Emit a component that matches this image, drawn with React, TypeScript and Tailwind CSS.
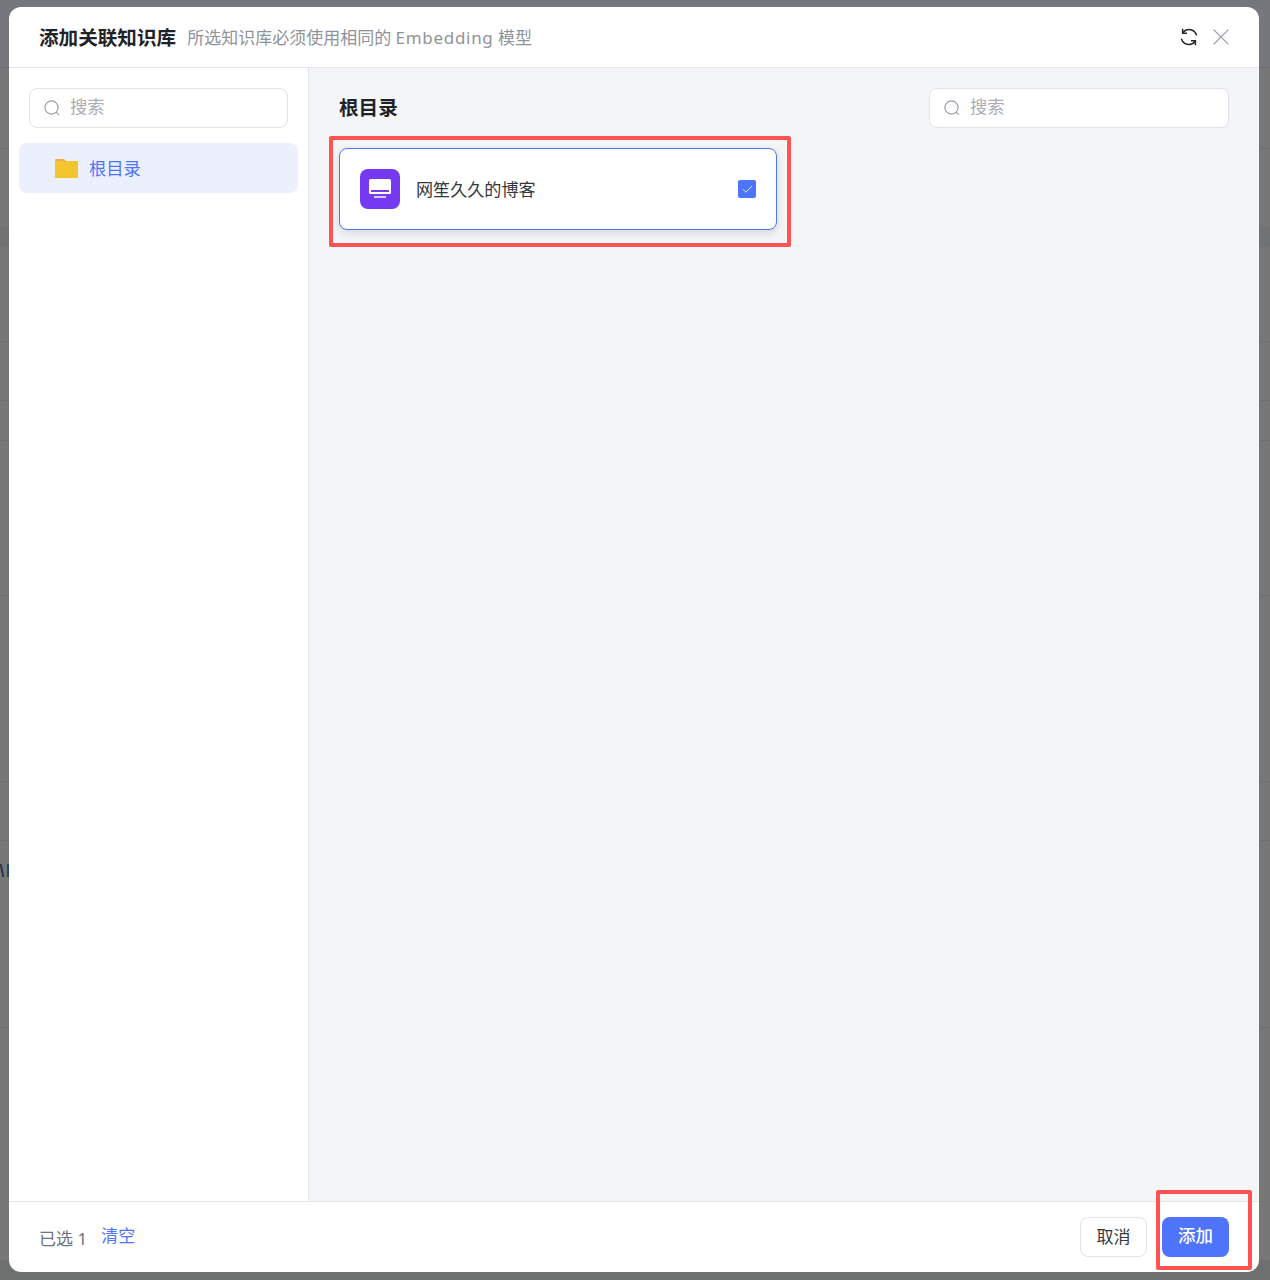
import { Check } from "lucide-react";

const font = "font-['Noto_Sans','Noto_Sans_CJK_SC',sans-serif]";

function SearchBox({ width }: { width: string }) {
  return (
    <div className={`flex h-10 items-center gap-[10px] rounded-lg border border-[#e0e2ea] bg-white pl-[14px] ${width}`}>
      <svg width="16" height="16" viewBox="0 0 16 16" fill="none" stroke="#9a9ea8" strokeWidth="1.2">
        <circle cx="7.5" cy="7.5" r="6.6" />
        <path d="M12.4 12.4l2.2 2.2" strokeLinecap="round" />
      </svg>
      <span className="pb-[2px] text-[17.3px] leading-none text-[#a9adb5]">搜索</span>
    </div>
  );
}

function RefreshIcon() {
  return (
    <svg width="18" height="20" viewBox="0 0 18 20" fill="none" stroke="#24282f" strokeWidth="1.6">
      <path d="M3 5.4A7.8 7.8 0 0 1 16.6 8.4" />
      <path d="M15 14.6A7.8 7.8 0 0 1 1.4 11.6" />
      <path d="M2.6 1.8v4.4h4.4" strokeWidth="1.5" />
      <path d="M15.4 18.2v-4.4h-4.4" strokeWidth="1.5" />
    </svg>
  );
}

function CloseIcon() {
  return (
    <svg width="16" height="16" viewBox="0 0 16 16" fill="none" stroke="#9a9ea8" strokeWidth="1.3">
      <path d="M0.6 0.6l14.8 14.8M15.4 0.6L0.6 15.4" />
    </svg>
  );
}

function FolderIcon() {
  return (
    <svg width="23" height="19" viewBox="0 0 23 19">
      <path d="M0 1a1 1 0 0 1 1-1h8l2 2H0z" fill="#eeaa4c" />
      <rect x="0" y="2" width="23" height="17" fill="#f3c62d" />
    </svg>
  );
}

function DatasetIcon() {
  return (
    <div className="flex h-10 w-10 items-center justify-center rounded-lg bg-[#7539f2]">
      <svg width="22" height="20" viewBox="0 0 22 20">
        <rect x="0" y="0" width="22" height="15" rx="1.5" fill="#fff" />
        <rect x="2" y="11" width="18" height="2" fill="#7539f2" />
        <rect x="5" y="17" width="12" height="2" fill="#d8c8fb" />
      </svg>
    </div>
  );
}

// faint rows of the page behind the overlay
const backdropLines = ["top-[341px]", "top-[400px]", "top-[440px]", "top-[595px]", "top-[781px]", "top-[840px]", "top-[1027px]"];

export default function App() {
  return (
    <div className={`relative h-[1280px] w-[1270px] overflow-hidden bg-[#767776] pl-[9px] pt-[7px] ${font}`}>
      <div className="absolute inset-x-0 top-0 h-[67px] bg-[#75777c]" />
      <div className="absolute inset-x-0 top-[67px] h-px bg-[#6b6d6e]" />
      <div className="absolute inset-x-0 top-[148px] h-px bg-[#6d6e6e]" />
      <div className="absolute inset-x-0 top-[227px] h-[20px] bg-[#717274]" />
      {backdropLines.map((line) => (
        <div key={line} className={`absolute inset-x-0 h-px bg-[#6d6e6e] ${line}`} />
      ))}
      <div className="absolute left-[1px] top-[864px] h-[13px] w-[2px] -rotate-12 bg-[#2a3350]" />
      <div className="absolute left-[7px] top-[864px] h-[13px] w-[2px] bg-[#1d4a7a]" />
      <div className="absolute inset-x-0 top-[1260px] h-5 bg-[#6e6f6f]" />

      <div className="relative flex h-[1265px] w-[1250px] flex-col overflow-hidden rounded-xl bg-white">
        <header className="flex h-[61px] shrink-0 items-center justify-between border-b border-[#e3e5ea] pl-[30px] pr-[30px]">
          <div className="flex items-center gap-[11px]">
            <span className="pt-[2px] text-[19.6px] font-bold leading-none text-[#1f2329]">添加关联知识库</span>
            <span className="text-[17px] leading-none text-[#8f939b]">
              所选知识库必须使用相同的 <span className="tracking-[0.7px]">Embedding</span> 模型
            </span>
          </div>
          <div className="flex items-center gap-[15px]">
            <RefreshIcon />
            <CloseIcon />
          </div>
        </header>

        <div className="flex min-h-0 flex-1">
          <aside className="w-[300px] shrink-0 border-r border-[#e3e5ea] px-[10px] pt-5">
            <div className="px-[10px]">
              <SearchBox width="w-[259px]" />
            </div>
            <div className="mt-[15px] flex h-[50px] w-[279px] items-center gap-[11px] rounded-lg bg-[#ecf0fd] pl-9">
              <FolderIcon />
              <span className="pt-[2px] text-[17.3px] leading-none text-[#4d74fa]">根目录</span>
            </div>
          </aside>

          <main className="flex-1 bg-[#f4f5f7] pl-[30px] pr-[30px] pt-5">
            <div className="flex items-center justify-between">
              <span className="text-[19.6px] font-bold leading-none text-[#1f2329]">根目录</span>
              <SearchBox width="w-[300px]" />
            </div>
            <div className="mt-5 flex h-[82px] w-[438px] items-center justify-between rounded-lg border border-[#4d74fa] bg-white pl-5 pr-5 shadow-[0_3px_8px_rgba(30,40,70,0.14)]">
              <div className="flex items-center gap-[16px]">
                <DatasetIcon />
                <span className="pt-[1px] text-[17.1px] leading-none text-[#33373e]">网笙久久的博客</span>
              </div>
              <div className="flex h-[18px] w-[18px] items-center justify-center rounded-[2px] bg-[#4d74fa]">
                <Check size={13} strokeWidth={1.5} className="text-white" />
              </div>
            </div>
          </main>
        </div>

        <footer className="flex h-[71px] shrink-0 items-center justify-between border-t border-[#e3e5ea] pl-[30px] pr-[30px]">
          <div className="flex items-center gap-[14px]">
            <span className="pt-[3px] text-[17px] leading-none text-[#6f7480]">已选 1</span>
            <span className="pb-[3px] text-[17px] leading-none text-[#4d74fa]">清空</span>
          </div>
          <div className="flex items-center gap-[15px]">
            <button className="h-10 w-[67px] rounded-lg border border-[#e0e2ea] bg-white pb-[2px] text-[17px] leading-none text-[#33373e]">取消</button>
            <button className="h-10 w-[67px] rounded-lg bg-[#4d74fa] pb-[2px] text-[17.5px] font-medium leading-none text-white">添加</button>
          </div>
        </footer>
      </div>

      <div className="pointer-events-none absolute left-[329px] top-[136px] h-[111px] w-[462px] rounded-[2px] border-4 border-[#fd5353]" />
      <div className="pointer-events-none absolute left-[1156px] top-[1190px] h-[80px] w-[96px] rounded-[2px] border-4 border-[#fd5353]" />
    </div>
  );
}
